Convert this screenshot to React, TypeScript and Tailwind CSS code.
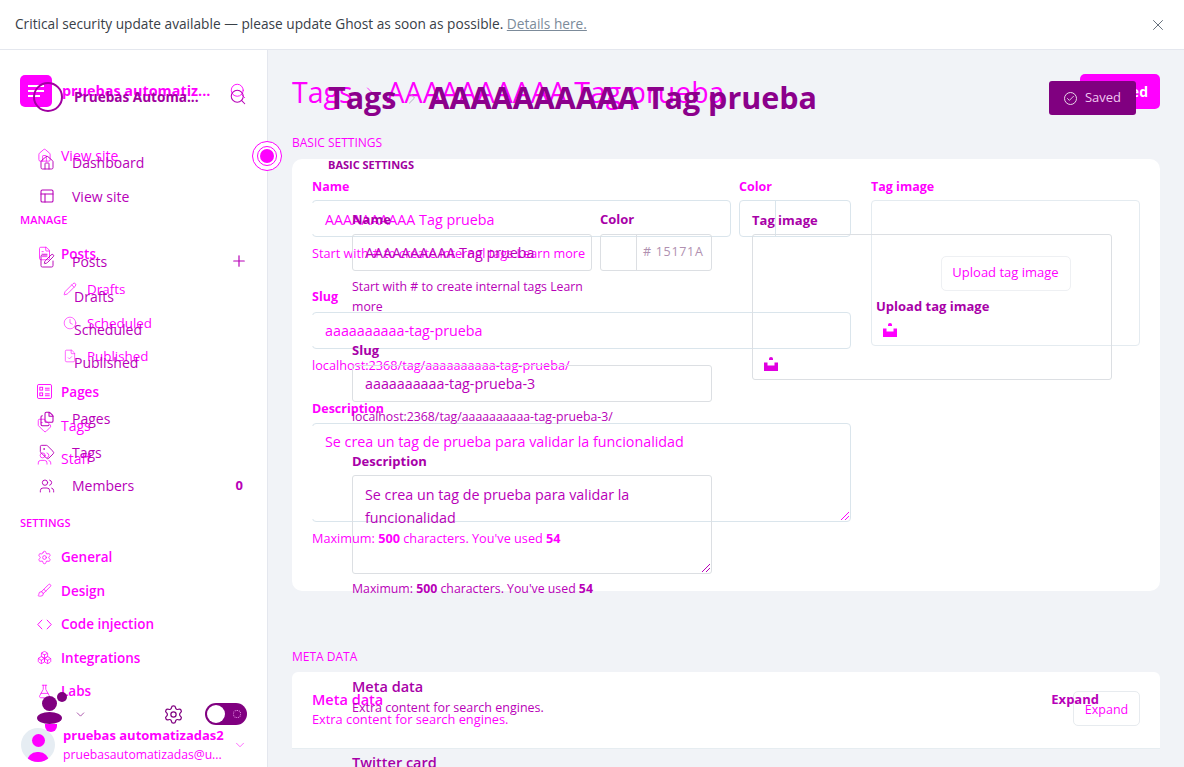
import {
  Boxes,
  Brush,
  Check,
  ChevronDown,
  ChevronRight,
  Clock,
  Files,
  FileCheck,
  FileText,
  FlaskConical,
  Home,
  PanelsTopLeft,
  Pencil,
  Plus,
  Search,
  Settings,
  SquarePen,
  Tag,
  Users,
  X,
} from "lucide-react";
import type { ReactNode } from "react";

const font = "font-['Open_Sans','Noto_Sans',sans-serif]";

function InboxIcon({ className }: { className: string }) {
  return (
    <svg viewBox="0 0 14 14" fill="currentColor" className={className}>
      <path d="M5 1.5a2 1.5 0 0 1 4 0V3H5z" />
      <path d="M0 5.5h3.5v3h7v-3H14V14H0z" />
    </svg>
  );
}

function PagesIcon({ className }: { className: string }) {
  return (
    <svg viewBox="0 0 16 16" fill="none" stroke="currentColor" strokeWidth={1} className={className}>
      <rect x="0.5" y="0.5" width="15" height="15" rx="1.5" />
      <rect x="3" y="3.5" width="3" height="3" />
      <rect x="3" y="9.5" width="3" height="3" />
      <path d="M8.5 4.5h5M8.5 6.5h5M8.5 10.5h5M8.5 12.5h5" />
    </svg>
  );
}

function CodeIcon({ className }: { className: string }) {
  return (
    <svg viewBox="0 0 16 16" fill="none" stroke="currentColor" strokeWidth={1} className={className}>
      <path d="M5.5 3 0.8 8l4.7 5M10.5 3l4.7 5-4.7 5" />
    </svg>
  );
}

function ResizeGrip() {
  return (
    <svg viewBox="0 0 8 8" stroke="currentColor" strokeWidth={1} className="absolute bottom-px right-px h-2 w-2">
      <path d="M8 0 0 8M8 4 4 8" />
    </svg>
  );
}

function RowA({ icon, label, bold }: { icon: ReactNode; label: string; bold?: boolean }) {
  return (
    <div className={`flex h-[33.6px] items-center gap-[9px] pl-[37px] ${bold ? "text-[13.5px] font-semibold" : "text-[14px]"}`}>
      {icon}
      <span>{label}</span>
    </div>
  );
}

function SubRowA({ icon, label }: { icon: ReactNode; label: string }) {
  return (
    <div className="flex h-[33.6px] items-center gap-[10px] pl-[63px] text-[13.4px]">
      {icon}
      <span>{label}</span>
    </div>
  );
}

function RowB({ icon, label, right }: { icon: ReactNode; label: string; right?: ReactNode }) {
  return (
    <div className="flex h-[33.4px] items-center gap-[17px] pl-[39px] pr-[25px] text-[14px]">
      {icon}
      <span className="flex-1">{label}</span>
      {right}
    </div>
  );
}

function SidebarA() {
  const i = "h-[15px] w-[15px]";
  return (
    <aside className="flex w-[268px] shrink-0 flex-col border-r border-[#e4e7ee] bg-white pt-[25px] text-[#ff00ff]">
      <div className="flex h-8 items-center pl-5 pr-[20px]">
        <div className="flex h-8 w-8 flex-col items-center justify-center gap-[3px] rounded-[5px] bg-[#ff00ff]">
          <span className="h-[2px] w-4 bg-white" />
          <span className="h-[2px] w-4 bg-white" />
          <span className="ml-2 h-[2px] w-3 self-start bg-white" />
        </div>
        <span className="ml-[10px] flex-1 text-[14.4px] font-bold">pruebas automatiz...</span>
        <Search className="h-[18px] w-[18px]" strokeWidth={1.2} />
      </div>
      <div className="mt-[32px]">
        <RowA icon={<Home className={i} strokeWidth={1.2} />} label="View site" />
      </div>
      <div className="mt-[39px] pl-5 text-[11px] font-semibold">MANAGE</div>
      <div className="mt-[9px]">
        <RowA icon={<FileText className={i} strokeWidth={1.2} />} label="Posts" bold />
        <div className="mb-[2px] mt-[1.5px]">
          <SubRowA icon={<Pencil className="h-[14px] w-[14px]" strokeWidth={1.2} />} label="Drafts" />
          <SubRowA icon={<Clock className="h-[14px] w-[14px]" strokeWidth={1} />} label="Scheduled" />
          <SubRowA icon={<FileCheck className="h-[14px] w-[14px]" strokeWidth={1} />} label="Published" />
        </div>
        <RowA icon={<PagesIcon className={i} />} label="Pages" bold />
        <RowA icon={<Tag className={i} strokeWidth={1.2} />} label="Tags" />
        <RowA icon={<Users className={i} strokeWidth={1.2} />} label="Staff" />
      </div>
      <div className="mt-[39px] pl-5 text-[11px] font-semibold">SETTINGS</div>
      <div className="mt-[9px]">
        <RowA icon={<Settings className={i} strokeWidth={1.2} />} label="General" bold />
        <RowA icon={<Brush className={i} strokeWidth={1.2} />} label="Design" bold />
        <RowA icon={<CodeIcon className={i} />} label="Code injection" bold />
        <RowA icon={<Boxes className={i} strokeWidth={1.2} />} label="Integrations" bold />
        <RowA icon={<FlaskConical className={i} strokeWidth={1.2} />} label="Labs" bold />
      </div>
      <div className="mt-[18px] flex items-center pl-[21px] pr-[20px]">
        <div className="relative flex h-[34px] w-[34px] items-end justify-center overflow-hidden rounded-full bg-[#e6edf3]">
          <span className="absolute top-[6px] h-[13px] w-[13px] rounded-full bg-[#ff00ff]" />
          <span className="h-[10px] w-[22px] rounded-t-full bg-[#ff00ff]" />
        </div>
        <div className="ml-2 flex-1 leading-[19px]">
          <div className="text-[13px] font-bold">pruebas automatizadas2</div>
          <div className="text-[12.2px]">pruebasautomatizadas@u...</div>
        </div>
        <ChevronDown className="h-[14px] w-[14px]" strokeWidth={1} />
      </div>
    </aside>
  );
}

function InputA({ className, children, grip }: { className: string; children?: ReactNode; grip?: boolean }) {
  // the diff leaves the left end of these fields white
  return (
    <div className={`relative rounded-[4px] border border-[#dae5ec] bg-white px-3 text-[14.3px] ${className}`}>
      <span className="absolute -left-px top-[2px] bottom-[2px] w-4 bg-white" />
      <span className="relative">{children}</span>
      {grip && <ResizeGrip />}
    </div>
  );
}

function MainA() {
  const label = "text-[12.5px] font-bold leading-[18px]";
  const hint = "text-[12.7px] leading-[18px]";
  return (
    <main className="flex-1 bg-[#f1f3f7] pl-6 pr-6 pt-6 text-[#ff00ff]">
      <div className="flex h-[35px] items-center justify-between">
        <div className="flex items-center gap-[7px] pt-[2px] text-[28.5px] font-medium">
          <span>Tags</span>
          <ChevronRight className="h-5 w-5" strokeWidth={1} />
          <span>AAAAAAAAAA Tag prueba</span>
        </div>
        <div className="flex h-[35px] w-20 items-center justify-end rounded-[5px] bg-[#ff00ff] pr-3 text-[14px] font-bold text-white">
          Saved
        </div>
      </div>
      <div className="mt-[26px] text-[12px] leading-4">BASIC SETTINGS</div>
      <section className="mt-2 grid h-[432px] grid-cols-[539px_269px] gap-5 rounded-[10px] bg-white px-5 pt-[19px]">
        <div>
          <div className="flex gap-2">
            <div className="w-[419px]">
              <div className={label}>Name</div>
              <InputA className="mt-[4px] flex h-[37px] items-center pt-[2px]">AAAAAAAAAA Tag prueba</InputA>
            </div>
            <div className="flex-1">
              <div className={label}>Color</div>
              <div className="mt-[4px] flex h-[37px] rounded-[4px] border border-[#dae5ec]">
                <span className="w-9 border-r border-[#dae5ec]" />
              </div>
            </div>
          </div>
          <div className={`mt-[7px] ${hint}`}>Start with # to create internal tags Learn more</div>
          <div className={`mt-[26px] ${label}`}>Slug</div>
          <InputA className="mt-[6px] flex h-[37px] items-center pt-[1px]">aaaaaaaaaa-tag-prueba</InputA>
          <div className={`mt-[7px] ${hint}`}>localhost:2368/tag/aaaaaaaaaa-tag-prueba/</div>
          <div className={`mt-[26px] ${label}`}>Description</div>
          <InputA className="mt-[5px] h-[99px] pt-[7px]" grip>
            Se crea un tag de prueba para validar la funcionalidad
          </InputA>
          <div className={`mt-[7px] ${hint}`}>
            Maximum: <b>500</b> characters. You've used <b>54</b>
          </div>
        </div>
        <div>
          <div className={label}>Tag image</div>
          <div className="relative mt-[4px] flex h-[146px] items-center justify-center rounded-[4px] border border-[#e4ebf0]">
            <div className="flex h-[35px] w-[130px] items-center justify-center rounded-[5px] border border-[#eef0f3] text-[13px]">
              Upload tag image
            </div>
            <InboxIcon className="absolute left-[11px] top-[122px] h-[14px] w-[14px]" />
          </div>
        </div>
      </section>
      <div className="mt-[58px] text-[12px] leading-4">META DATA</div>
      <section className="mt-[7px] rounded-t-[6px] bg-white">
        <div className="flex h-[77px] items-center justify-between border-b border-[#e6edf1] px-5">
          <div className="pb-[2px]">
            <div className="text-[14.5px] font-semibold leading-5">Meta data</div>
            <div className="text-[12.8px] leading-[18px]">Extra content for search engines.</div>
          </div>
          <div className="mb-[3px] flex h-[35px] w-[67px] items-center justify-center rounded-[5px] border border-[#e7ebef] pt-1 text-[12.5px]">
            Expand
          </div>
        </div>
      </section>
    </main>
  );
}

function SidebarB() {
  const i = "h-4 w-4";
  return (
    <aside className="flex w-[268px] shrink-0 flex-col pt-8 text-[#b800b8]">
      <div className="flex h-[30px] items-center pl-[33px] pr-[21px]">
        <span className="h-[30px] w-[30px] rounded-full border-2 border-[#a000a0]" />
        <span className="ml-[11px] flex-1 text-[13.6px] font-bold text-[#a000a0]">Pruebas Automa...</span>
        <Search className="h-[18px] w-[18px]" strokeWidth={1.4} />
      </div>
      <div className="mt-[34px]">
        <RowB icon={<Home className={i} strokeWidth={1.4} />} label="Dashboard" />
        <RowB icon={<PanelsTopLeft className={i} strokeWidth={1.6} />} label="View site" />
      </div>
      <div className="mt-[32px]">
        <RowB
          icon={<SquarePen className={i} strokeWidth={1.4} />}
          label="Posts"
          right={<Plus className="-mr-[5px] h-[18px] w-[18px]" strokeWidth={1.6} />}
        />
        <div className="mt-[2px] pl-[35px] text-[14px]">
          <div className="flex h-[33px] items-center pl-[39px]">Drafts</div>
          <div className="flex h-[33px] items-center pl-[39px]">Scheduled</div>
          <div className="flex h-[33px] items-center pl-[39px]">Published</div>
        </div>
      </div>
      <div className="mt-[23px]">
        <RowB icon={<Files className={i} strokeWidth={1.6} />} label="Pages" />
        <RowB icon={<Tag className={i} strokeWidth={1.4} />} label="Tags" />
        <RowB icon={<Users className={i} strokeWidth={1.4} />} label="Members" right={<span className="text-[13px] font-bold">0</span>} />
      </div>
      <div className="mt-[194px] flex items-center pl-[38px]">
        <div className="relative h-[36px] w-[24px]">
          <span className="absolute left-[4px] top-0 h-[15px] w-[15px] rounded-full bg-[#800080]" />
          <span className="absolute left-[19px] -top-[4px] h-[10px] w-[10px] rounded-full bg-[#800080]" />
          <span className="absolute -left-px top-[16px] h-[12px] w-[25px] rounded-[50%] bg-[#800080]" />
          <span className="absolute left-[7px] top-[28px] h-2 w-3 rounded-b-full bg-[#ff00ff]" />
        </div>
        <ChevronDown className="ml-[12px] h-[13px] w-[13px] text-[#800080]" strokeWidth={1.2} />
        <Settings className="ml-[76px] h-[21px] w-[21px] text-[#800080]" strokeWidth={1.4} />
        <div className="ml-[21px] flex h-[22px] w-[42px] items-center justify-between rounded-full bg-[#800080] pl-[2px] pr-[6px]">
          <span className="h-[18px] w-[18px] rounded-full bg-white" />
          <span className="h-2 w-2 rounded-full border border-dotted border-[#f0a0f0]" />
        </div>
      </div>
    </aside>
  );
}

function MainB() {
  const label = "text-[13px] font-bold leading-4 text-[#a800a8]";
  const hint = "text-[12.3px] leading-5";
  const box = "rounded-[3px] border border-[#dcdfe3]";
  return (
    <main className="flex-1 pl-[60px] pr-12 pt-[31px] text-[#b800b8]">
      <div className="flex h-[34px] items-center justify-between">
        <div className="flex items-center gap-[6px] text-[30.5px] font-bold text-[#8b008b]">
          <span>Tags</span>
          <ChevronRight className="h-5 w-5 text-[#b0b0c0]" strokeWidth={1.2} />
          <span>AAAAAAAAAA Tag prueba</span>
        </div>
        <div className="flex h-[34px] w-[87px] items-center justify-center gap-2 rounded-[3px] bg-[#800080] text-[13px] text-[#f0c8f0]">
          <span className="flex h-[13px] w-[13px] items-center justify-center rounded-full border border-[#e8d8e8]">
            <Check className="h-[9px] w-[9px] text-white" />
          </span>
          Saved
        </div>
      </div>
      <div className="mt-[42px] text-[11px] font-bold leading-4 text-[#a000a0]">BASIC SETTINGS</div>
      <div className="mt-[38px] grid grid-cols-[360px_360px] gap-10 pl-6">
        <div>
          <div className="flex gap-2">
            <div className="w-[240px]">
              <div className={label}>Name</div>
              <div className={`mt-[7px] flex h-[37px] items-center px-3 text-[14.3px] ${box}`}>AAAAAAAAAA Tag prueba</div>
              <div className={`mt-[6px] ${hint}`}>Start with # to create internal tags Learn more</div>
            </div>
            <div className="flex-1">
              <div className={label}>Color</div>
              <div className={`mt-[7px] flex h-[37px] items-center ${box}`}>
                <span className="h-full w-9 border-r border-[#dcdfe3]" />
                <span className="pl-[6px] text-[12.5px] tracking-[0.7px] text-[#b090b0]"># 15171A</span>
              </div>
            </div>
          </div>
          <div className={`mt-[25px] ${label}`}>Slug</div>
          <div className={`mt-[7px] flex h-[37px] items-center px-3 text-[14.3px] ${box}`}>aaaaaaaaaa-tag-prueba-3</div>
          <div className={`mt-[5px] ${hint}`}>localhost:2368/tag/aaaaaaaaaa-tag-prueba-3/</div>
          <div className={`mt-[26px] ${label}`}>Description</div>
          <div className={`relative mt-[6px] h-[99px] px-3 pt-[7px] text-[14.3px] leading-[23px] ${box}`}>
            Se crea un tag de prueba para validar la funcionalidad
            <ResizeGrip />
          </div>
          <div className={`mt-[5px] ${hint}`}>
            Maximum: <b>500</b> characters. You've used <b>54</b>
          </div>
          <div className="mt-[78px] text-[14.5px] font-semibold leading-5 text-[#a800a8]">Meta data</div>
          <div className="mt-px text-[12.5px] leading-5">Extra content for search engines.</div>
          <div className="mt-[35px] text-[14.5px] font-semibold leading-5 text-[#a800a8]">Twitter card</div>
        </div>
        <div>
          <div className={`relative mt-[23px] h-[146px] w-[360px] ${box}`}>
            <span className="absolute -left-px -top-[23px] text-[13px] font-bold leading-4 text-[#a800a8]">Tag image</span>
            <span className="absolute left-[123px] top-[63px] text-[13px] font-bold leading-4 text-[#a800a8]">Upload tag image</span>
            <InboxIcon className="absolute left-[11px] top-[122px] h-[14px] w-[14px] text-[#e000e0]" />
          </div>
          <div className="mt-[310px] flex justify-end pr-[13px] text-[13px] font-bold text-[#b800b8]">Expand</div>
        </div>
      </div>
    </main>
  );
}

export default function App() {
  return (
    <div className={`relative flex h-[767px] w-[1184px] flex-col overflow-hidden bg-white ${font}`}>
      <div className="flex h-[50px] shrink-0 items-center justify-between border-b border-[#e4e7ee] bg-white pl-[15px] pr-[17px] text-[13.7px] text-[#394047]">
        <span>
          Critical security update available — please update Ghost as soon as possible.{" "}
          <span className="text-[#7c8b9a] underline">Details here.</span>
        </span>
        <X className="h-[18px] w-[18px] text-[#626d79]" strokeWidth={1.3} />
      </div>
      <div className="flex flex-1 overflow-hidden">
        <SidebarA />
        <MainA />
      </div>
      <div className="absolute inset-x-0 bottom-0 top-[50px] flex overflow-hidden">
        <SidebarB />
        <MainB />
      </div>
      <span className="absolute left-[252px] top-[141px] flex h-[30px] w-[30px] items-center justify-center rounded-full border border-[#ff00ff] bg-white">
        <span className="flex h-[20px] w-[20px] items-center justify-center rounded-full border border-[#ff00ff]">
          <span className="h-[14px] w-[14px] rounded-full bg-[#ff00ff]" />
        </span>
      </span>
    </div>
  );
}
